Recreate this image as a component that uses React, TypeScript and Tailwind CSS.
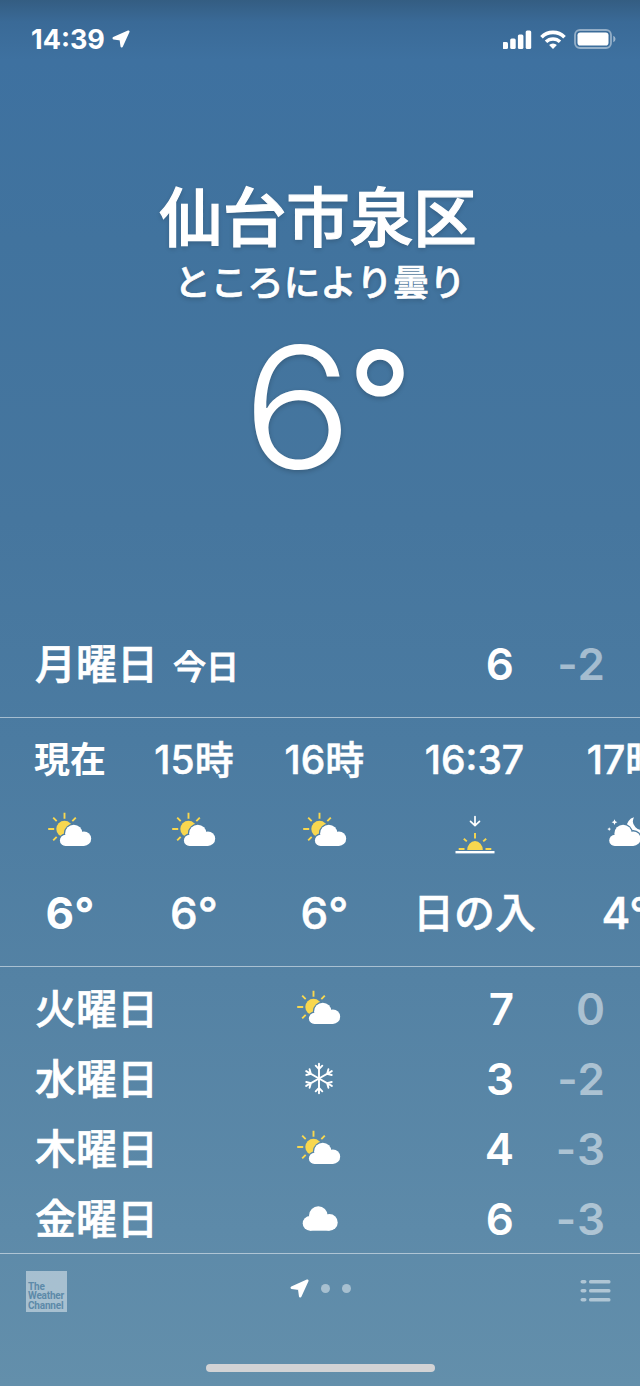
import { useId } from "react";
import clsx from "clsx";

type Condition = "partlyCloudy" | "sunset" | "cloudyNight" | "snow" | "cloudy";

interface HourlyEntry {
  label: string;
  icon: Condition;
  value: string;
  width: string;
  current?: boolean;
}

interface DailyEntry {
  day: string;
  icon: Condition;
  high: string;
  low: string;
}

const HOURLY: HourlyEntry[] = [
  { label: "現在", icon: "partlyCloudy", value: "6°", width: "w-[70px]", current: true },
  { label: "15時", icon: "partlyCloudy", value: "6°", width: "w-[78px]" },
  { label: "16時", icon: "partlyCloudy", value: "6°", width: "w-[83px]" },
  { label: "16:37", icon: "sunset", value: "日の入", width: "w-[117px]" },
  { label: "17時", icon: "cloudyNight", value: "4°", width: "w-[85px]" },
];

const DAILY: DailyEntry[] = [
  { day: "火曜日", icon: "partlyCloudy", high: "7", low: "0" },
  { day: "水曜日", icon: "snow", high: "3", low: "-2" },
  { day: "木曜日", icon: "partlyCloudy", high: "4", low: "-3" },
  { day: "金曜日", icon: "cloudy", high: "6", low: "-3" },
];

/* Small cloud shared by the sun and moon icons. */
const CloudShape = () => (
  <>
    <circle cx="18" cy="28.400" r="5.600" />
    <circle cx="26.300" cy="21.500" r="8.700" />
    <circle cx="36.400" cy="26.700" r="7.300" />
    <rect x="18" y="24" width="18.400" height="10" />
  </>
);

const PartlyCloudyIcon = () => {
  const maskId = useId();
  return (
    <svg width="44" height="40" viewBox="0.500 -1 44 40" fill="none">
      <mask id={maskId} maskUnits="userSpaceOnUse" x="0" y="-1" width="44" height="40">
        <rect y="-1" width="44" height="40" fill="#fff" />
        <g fill="#000" stroke="#000" strokeWidth="2.600">
          <CloudShape />
        </g>
      </mask>
      <g mask={`url(#${maskId})`}>
        <circle cx="17" cy="17" r="8.200" fill="#f8d74f" />
        <path
          d="M17 .7v6M.7 17h6M5.700 5.700l3.500 3.500M28.300 5.700l-3.500 3.500M5.700 28.300l3.500-3.500"
          stroke="#f8d74f"
          strokeWidth="1.900"
        />
      </g>
      <g fill="#fff">
        <CloudShape />
      </g>
    </svg>
  );
};

const SunsetIcon = () => (
  <svg width="44" height="40" viewBox="0 -1 44 40" fill="none">
    <path
      d="M22 4.500v9M17.500 9.300l4.500 4.300l4.500-4.300"
      stroke="#fff"
      strokeWidth="1.700"
      strokeLinecap="round"
      strokeLinejoin="round"
    />
    <path d="M14.200 38a7.800 9 0 0 1 15.600 0z" fill="#f8d74f" />
    <path
      d="M22 21v5.500M10.800 26.800l3 2.600M33.200 26.800l-3 2.600M5.700 37h5.800M32.500 37h5.800"
      stroke="#f8d74f"
      strokeWidth="1.900"
    />
    <rect x="2.500" y="39" width="39" height="2.400" fill="#fff" />
  </svg>
);

const CloudyNightIcon = () => {
  const maskId = useId();
  return (
    <svg width="44" height="40" viewBox="0 -1 44 40" fill="none">
      <mask id={maskId} maskUnits="userSpaceOnUse" x="0" y="-1" width="48" height="40">
        <rect y="-1" width="48" height="40" fill="#fff" />
        <g transform="translate(-7.200 0)" fill="#000" stroke="#000" strokeWidth="2.600">
          <CloudShape />
        </g>
      </mask>
      <path
        d="M30 5.300a8.500 8.500 0 0 0 11.500 11.500A9.500 9.500 0 1 1 30 5.300z"
        fill="#fff"
        mask={`url(#${maskId})`}
      />
      <g transform="translate(-7.200 0)" fill="#fff">
        <CloudShape />
      </g>
      <path
        d="M10.500 7.300l.9 2l2 .9l-2 .9l-.9 2l-.9-2l-2-.9l2-.9zM5.200 15.200l.6 1.300l1.300.6l-1.300.6l-.6 1.300l-.6-1.300l-1.300-.6l1.300-.6z"
        fill="#fff"
      />
    </svg>
  );
};

const SnowIcon = () => (
  <svg width="44" height="40" viewBox="0 0 44 40" fill="none">
    {[0, 60, 120, 180, 240, 300].map((angle) => (
      <path
        key={angle}
        d="M22 19.500V4.700M18.700 6.700l3.300 3.400l3.300-3.400"
        transform={`rotate(${angle} 22 19.500)`}
        stroke="#fff"
        strokeWidth="1.900"
        strokeLinecap="round"
        strokeLinejoin="round"
      />
    ))}
  </svg>
);

const CloudyIcon = () => (
  <svg width="44" height="40" viewBox="0 0 44 40" fill="#fff">
    <circle cx="13" cy="24.400" r="7.300" />
    <circle cx="21.300" cy="16.500" r="9.300" />
    <circle cx="32.400" cy="23.400" r="8.300" />
    <rect x="13" y="19" width="19.400" height="12.700" />
  </svg>
);

const ICONS: Record<Condition, () => React.ReactElement> = {
  partlyCloudy: PartlyCloudyIcon,
  sunset: SunsetIcon,
  cloudyNight: CloudyNightIcon,
  snow: SnowIcon,
  cloudy: CloudyIcon,
};

const LocationArrow = ({ size }: { size: number }) => (
  <svg width={size} height={size} viewBox="0 0 18 18">
    <path
      d="M16.400 1.600L1.700 8.200L8.700 9.300L9.700 16.300z"
      fill="#fff"
      stroke="#fff"
      strokeWidth="2.400"
      strokeLinejoin="round"
    />
  </svg>
);

const StatusBar = () => (
  <header className="flex h-[78px] items-center justify-between pr-6 pl-[31px]">
    <div className="flex items-center gap-[7px]">
      <span className="text-[27px] leading-none font-bold">14:39</span>
      <LocationArrow size={18} />
    </div>
    <div className="flex items-center gap-2">
      <svg width="29" height="19" viewBox="0.500 0 29 19" fill="#fff">
        <rect x="0" y="12" width="5.500" height="7" rx="1.500" />
        <rect x="7.700" y="8.500" width="5.500" height="10.500" rx="1.500" />
        <rect x="15.400" y="4.500" width="5.500" height="14.500" rx="1.500" />
        <rect x="23.200" y="0.500" width="5.500" height="18.500" rx="1.500" />
      </svg>
      <svg width="26" height="19" viewBox="0 0 26 19" fill="none" stroke="#fff">
        <path d="M1.500 7.200a16.300 16.300 0 0 1 23 0" strokeWidth="3.700" />
        <path d="M6 11.800a10 10 0 0 1 14 0" strokeWidth="3.400" />
        <path d="M13 18.900l-3.900-3.900a5.500 5.500 0 0 1 7.800 0z" fill="#fff" stroke="none" />
      </svg>
      <svg width="42" height="20" viewBox="0 0 42 20" fill="none">
        <rect x="1" y="1" width="36" height="18" rx="5" stroke="#fff" strokeOpacity=".45" strokeWidth="1.800" />
        <rect x="3.500" y="3.500" width="31" height="13" rx="2.800" fill="#fff" />
        <path d="M39.300 6.800v6.400q2.200-1 2.200-3.200t-2.200-3.200z" fill="#fff" fillOpacity=".5" />
      </svg>
    </div>
  </header>
);

const CurrentConditions = () => (
  <section className="flex h-[534px] flex-col items-center text-shadow-[0_2px_5px_rgb(0_0_0/0.2)]">
    <h1 className="mt-[105px] mr-1 text-[63.5px] leading-[70px] font-medium [-webkit-text-stroke:1.2px_white]">
      仙台市泉区
    </h1>
    <p className="mt-2 text-[36.5px] leading-[44px] font-medium [-webkit-text-stroke:0.7px_white]">ところにより曇り</p>
    <p className="mt-[17px] ml-5 flex text-[168px] leading-[170px] font-light">
      <span className="inline-block scale-x-[1.09]">6</span>
      <span className="mt-[-4px] -ml-px text-[144px] font-normal">°</span>
    </p>
  </section>
);

interface TemperaturesProps {
  high: string;
  low: string;
}

const Temperatures = ({ high, low }: TemperaturesProps) => (
  <div className="-mt-px -mr-px flex text-right text-[44px] leading-none font-semibold tracking-[1px]">
    <span className="w-16">{high}</span>
    <span className="w-[91px] text-white/50">{low}</span>
  </div>
);

const TodayRow = () => (
  <section className="flex h-[106px] items-center justify-between border-b border-white/50 pr-[35px] pl-[35px]">
    <div className="flex items-baseline gap-[15px] font-medium">
      <span className="text-[41px] leading-none [-webkit-text-stroke:0.7px_white]">月曜日</span>
      <span className="text-[33px] leading-none [-webkit-text-stroke:0.9px_white]">今日</span>
    </div>
    <Temperatures high="6" low="-2" />
  </section>
);

const HourlyForecast = () => (
  <section className="flex h-[249px] gap-[50px] overflow-hidden border-b border-white/50 pl-[35px]">
    {HOURLY.map(({ label, icon, value, width, current }) => {
      const Icon = ICONS[icon];
      return (
        <div
          key={label}
          className={clsx(
            "flex shrink-0 flex-col items-center whitespace-nowrap",
            width,
            current ? "font-bold" : "font-medium [-webkit-text-stroke:0.5px_white]",
          )}
        >
          <span className={clsx("mt-[18px] leading-[48px]", current ? "text-[36px]" : "text-[39px]")}>{label}</span>
          <span className="mt-[27px] flex h-10 [&>svg]:overflow-visible">
            <Icon />
          </span>
          <span className={clsx("mt-9 leading-[52px]", icon === "sunset" ? "text-[41px]" : "text-[44px]")}>
            {value}
          </span>
        </div>
      );
    })}
  </section>
);

const DailyForecast = () => (
  <section className="h-[287px] border-b border-white/50 pt-[7px]">
    {DAILY.map(({ day, icon, high, low }) => {
      const Icon = ICONS[icon];
      return (
        <div key={day} className="flex h-[70px] items-center pr-[35px] pl-[35px]">
          <span className="w-[262px] text-[41px] leading-none font-medium [-webkit-text-stroke:0.7px_white]">
            {day}
          </span>
          <Icon />
          <div className="ml-auto">
            <Temperatures high={high} low={low} />
          </div>
        </div>
      );
    })}
  </section>
);

const Footer = () => (
  <footer className="flex h-[132px] flex-col items-center justify-between pt-[17px] pb-[14px]">
    <div className="flex w-full items-start justify-between pr-[29px] pl-[26px]">
      <div className="flex h-[41px] w-[41px] flex-col justify-end bg-white/45 pb-[2px] pl-[2px] font-['Roboto',sans-serif] text-[10px] leading-[9.5px] font-bold tracking-[-0.2px] text-[#5d8aa9]">
        <span>The</span>
        <span>Weather</span>
        <span>Channel</span>
      </div>
      <div className="mt-2 -ml-[7px] flex items-center gap-3">
        <LocationArrow size={19} />
        <span className="h-[9px] w-[9px] rounded-full bg-white/45" />
        <span className="h-[9px] w-[9px] rounded-full bg-white/45" />
      </div>
      <svg className="mt-2" width="31" height="23" viewBox="0 0 31 23" fill="#fff" fillOpacity=".5">
        {[1, 10, 19].map((y) => (
          <g key={y}>
            <rect x="0.500" y={y} width="6" height="3.600" rx="1.800" />
            <rect x="9" y={y} width="21.500" height="3.600" rx="1.500" />
          </g>
        ))}
      </svg>
    </div>
    <div className="h-2 w-[229px] rounded-full bg-[#d2d3d5]" />
  </footer>
);

export default function App() {
  return (
    <main className="h-[1386px] w-[640px] overflow-hidden bg-linear-[180deg,#345d82_0px,#3a6a97_22px,#3e71a0_60px,#41739e_240px,#46769e_520px,#4b7ba1_740px,#5482a4_980px,#5d8aa9_1230px,#638fab_1386px] font-['Inter','Noto_Sans_CJK_JP',sans-serif] text-white">
      <StatusBar />
      <CurrentConditions />
      <TodayRow />
      <HourlyForecast />
      <DailyForecast />
      <Footer />
    </main>
  );
}
